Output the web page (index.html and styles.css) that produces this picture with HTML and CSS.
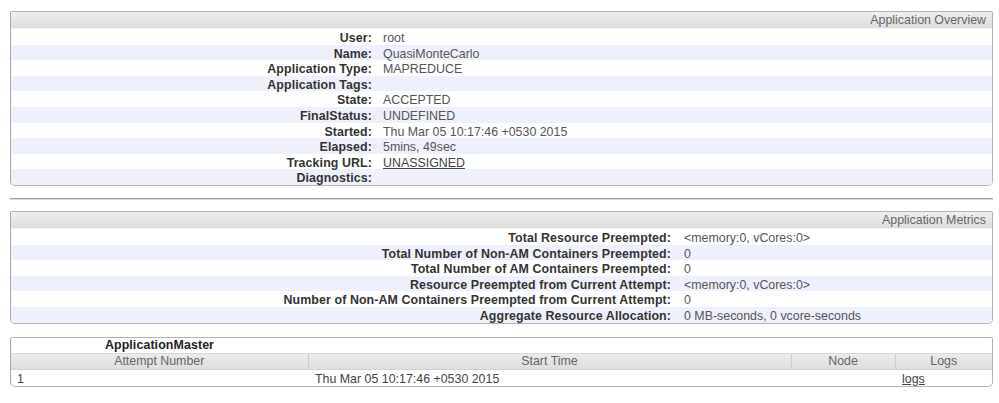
FILE: index.html
```html
<!DOCTYPE html>
<html>
<head>
<meta charset="utf-8">
<title>Application</title>
<link rel="stylesheet" href="styles.css">
</head>
<body>
<div class="page">
  <div class="panel">
    <div class="panel-head">Application Overview</div>
    <table class="info info-overview">
      <tr><th>User:</th><td>root</td></tr>
      <tr><th>Name:</th><td>QuasiMonteCarlo</td></tr>
      <tr><th>Application Type:</th><td>MAPREDUCE</td></tr>
      <tr><th>Application Tags:</th><td></td></tr>
      <tr><th>State:</th><td>ACCEPTED</td></tr>
      <tr><th>FinalStatus:</th><td>UNDEFINED</td></tr>
      <tr><th>Started:</th><td>Thu Mar 05 10:17:46 +0530 2015</td></tr>
      <tr><th>Elapsed:</th><td>5mins, 49sec</td></tr>
      <tr><th>Tracking URL:</th><td><a class="link" href="#">UNASSIGNED</a></td></tr>
      <tr><th>Diagnostics:</th><td></td></tr>
    </table>
  </div>

  <div class="divider"></div>

  <div class="panel">
    <div class="panel-head">Application Metrics</div>
    <table class="info info-metrics">
      <tr><th>Total Resource Preempted:</th><td>&lt;memory:0, vCores:0&gt;</td></tr>
      <tr><th>Total Number of Non-AM Containers Preempted:</th><td>0</td></tr>
      <tr><th>Total Number of AM Containers Preempted:</th><td>0</td></tr>
      <tr><th>Resource Preempted from Current Attempt:</th><td>&lt;memory:0, vCores:0&gt;</td></tr>
      <tr><th>Number of Non-AM Containers Preempted from Current Attempt:</th><td>0</td></tr>
      <tr><th>Aggregate Resource Allocation:</th><td>0 MB-seconds, 0 vcore-seconds</td></tr>
    </table>
  </div>

  <div class="panel panel-attempts">
    <table class="attempts">
      <colgroup>
        <col class="c-num"><col class="c-start"><col class="c-node"><col class="c-logs">
      </colgroup>
      <tr class="caption-row"><th class="caption">ApplicationMaster</th><th colspan="3"></th></tr>
      <tr class="head-row"><th>Attempt Number</th><th>Start Time</th><th>Node</th><th>Logs</th></tr>
      <tr class="data-row"><td>1</td><td>Thu Mar 05 10:17:46 +0530 2015</td><td></td><td><a class="link" href="#">logs</a></td></tr>
    </table>
  </div>
</div>
</body>
</html>
```

FILE: styles.css
```css
html, body {
  margin: 0;
  padding: 0;
  background: #ffffff;
}

body {
  font-family: "Liberation Sans", Arial, sans-serif;
  font-size: 12.4px;
  color: #555555;
}

.page {
  padding: 11px 6px 0 10px;
}

.panel {
  border: 1px solid #b4b4b4;
  border-left-color: #a8a8a8;
  border-radius: 2px 2px 5px 5px;
  overflow: hidden;
  background: #ffffff;
}

.panel-head {
  height: 17px;
  line-height: 17px;
  text-align: right;
  padding-right: 6px;
  color: #666666;
  background: linear-gradient(#eeeeee, #dedede);
  border-bottom: 1px solid #f4f4f4;
  box-sizing: border-box;
}

.info {
  width: 100%;
  border-collapse: collapse;
}

.info tr {
  height: 15.6px;
}

.info tr:nth-child(even) {
  background: #eef0fc;
}

.info th,
.info td {
  padding: 4px 0 0 0;
  line-height: 11.6px;
  vertical-align: top;
}

.info th {
  text-align: right;
  font-weight: bold;
  color: #333333;
  letter-spacing: 0.1px;
  white-space: nowrap;
}

.info td {
  color: #555555;
}

.info-overview th { width: 361px; }
.info-overview td { padding-left: 11px; }

.info-metrics th { width: 660px; }
.info-metrics td { padding-left: 13px; }

.link {
  color: #444444;
  text-decoration: underline;
}

.divider {
  margin: 12px 0 11px 0;
  border-top: 1px solid #9c9c9c;
  border-bottom: 1px solid #dcdcdc;
}

.panel-attempts {
  margin-top: 13px;
}

.attempts {
  width: 100%;
  border-collapse: collapse;
  table-layout: fixed;
}

.c-num { width: 297px; }
.c-start { width: 483px; }
.c-node { width: 104px; }
.c-logs { width: auto; }

.caption-row {
  height: 15px;
}

.caption {
  font-weight: bold;
  color: #222222;
  text-align: center;
  padding: 0;
  line-height: 15px;
  letter-spacing: 0.1px;
}

.head-row {
  height: 16px;
  background: linear-gradient(#ececec, #dedede);
}

.head-row th {
  font-weight: normal;
  color: #666666;
  text-align: center;
  padding: 0;
  line-height: 14px;
  border-top: 1px solid #d8d8d8;
  border-bottom: 1px solid #d0d0d0;
}

.head-row th + th {
  border-left: 1px solid #cccccc;
}

.data-row {
  height: 16px;
}

.data-row td {
  padding: 2px 0 0 7px;
  line-height: 14px;
  color: #444444;
  white-space: nowrap;
}

.data-row td:first-child {
  padding-left: 6px;
}
```
